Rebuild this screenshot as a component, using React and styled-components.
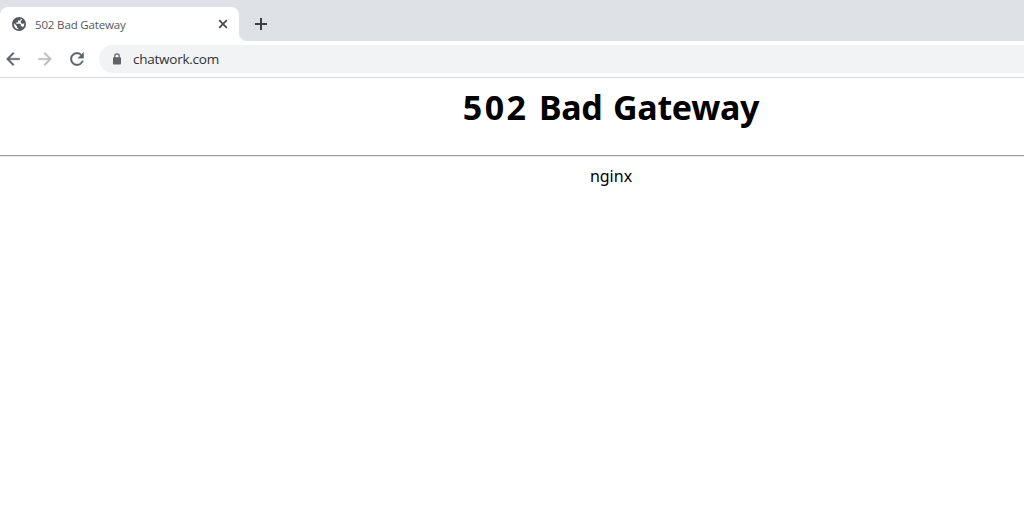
import styled, { createGlobalStyle } from 'styled-components'
import { MdArrowBack, MdArrowForward, MdRefresh } from 'react-icons/md'

const GlobalStyle = createGlobalStyle`
  * {
    box-sizing: border-box;
  }
  body {
    margin: 0;
    background-color: #fff;
    overflow: hidden;
  }
`

const StyledBrowser = styled.div`
  width: 100%;
  height: 527px;
  overflow: hidden;
  background-color: #fff;
  font-family: 'Open Sans', 'Noto Sans', sans-serif;
`

const StyledTabStrip = styled.div`
  display: flex;
  height: 41px;
  padding-top: 7px;
  background-color: #dee1e6;
`

const StyledTab = styled.div`
  display: flex;
  align-items: center;
  width: 239px;
  height: 34px;
  padding: 0 11px 0 12px;
  border-radius: 8px 8px 0 0;
  background-color: #fff;

  svg {
    flex: none;
    display: block;
  }
`

const StyledTabTitle = styled.span`
  flex: 1;
  margin-left: 9px;
  padding-top: 2px;
  font-size: 11.5px;
  line-height: 16px;
  letter-spacing: -0.15px;
  white-space: nowrap;
  color: #55585c;
`

// Outward curve where the tab meets the toolbar
const StyledTabFoot = styled.div`
  align-self: flex-end;
  width: 8px;
  height: 8px;
  background: radial-gradient(circle at 100% 0, transparent 7.5px, #fff 8.5px);
`

const StyledNewTab = styled.div`
  display: flex;
  align-items: center;
  height: 34px;
  margin-left: 8px;
`

const StyledToolbar = styled.div`
  display: flex;
  align-items: center;
  height: 37px;
  padding-left: 3px;
  border-bottom: 1px solid #d9dadc;
  background-color: #fff;
`

const StyledNavIcon = styled.div`
  display: flex;
  width: 32px;
  color: ${(props) => (props.$disabled ? '#babcbe' : '#5f6368')};

  path:not([fill='none']) {
    stroke: currentColor;
    stroke-width: 0.4px;
  }
`

const StyledAddressBar = styled.div`
  display: flex;
  flex: 1;
  align-items: center;
  height: 28px;
  padding-left: 13px;
  border-radius: 14px 0 0 14px;
  background-color: #f1f3f4;
`

const StyledUrl = styled.span`
  margin-left: 11px;
  font-size: 13.5px;
  line-height: 20px;
  letter-spacing: -0.25px;
  color: #303236;
`

// The window is wider than the visible area
const StyledPage = styled.main`
  width: 1222px;
  text-align: center;
  color: #000;
  font-family: 'Noto Sans', 'Open Sans', sans-serif;

  h1 {
    margin: 0;
    padding-top: 5px;
    height: 77px;
    font-size: 34px;
    line-height: 48px;
    font-weight: 700;
    letter-spacing: -0.3px;
    word-spacing: 2px;
  }

  hr {
    margin: 0;
    border: 0;
    height: 2px;
    border-top: 1px solid #9a9a9a;
    border-bottom: 1px solid #eee;
  }

  p {
    margin: 7px 0 0;
    font-size: 16px;
    line-height: 24px;
  }
`

const StyledCode = styled.span`
  letter-spacing: 2.4px;
`

const Globe = () => (
  <svg width='14' height='14' viewBox='0 0 14 14'>
    <circle cx='7' cy='7' r='7' fill='#55595e' />
    <path
      d='M8.6 1.7V2.4C8.6 3.1 8 3.6 7.3 3.6H6V4.8C6 5.2 5.7 5.5 5.3 5.5H4.2V6.8H8C8.4 6.8 8.8 7.1 8.8 7.5V9.3H9.5C10.2 9.3 10.7 9.7 10.9 10.4A5.2 5.2 0 0 0 12.3 7C12.3 6.7 12.3 6.4 12.2 6.1L11.4 6.7H9.8L8.7 5.6V4.2L9.9 3H10.4A5.3 5.3 0 0 0 8.6 1.7Z M1.9 6.1 5 9.2V9.9C5 10.6 5.6 11.2 6.3 11.2V12.3A5.3 5.3 0 0 1 1.9 6.1Z'
      fill='#fff'
    />
  </svg>
)

const CloseMark = () => (
  <svg width='10' height='10' viewBox='0 0 10 10'>
    <path d='M1.2 1.2 8.8 8.8M8.8 1.2 1.2 8.8' stroke='#45484c' strokeWidth='1.7' />
  </svg>
)

const Plus = () => (
  <svg width='12' height='12' viewBox='0 0 12 12'>
    <path d='M6 0V12M0 6H12' stroke='#3c4043' strokeWidth='2' />
  </svg>
)

const Lock = () => (
  <svg width='10' height='12' viewBox='0 0 10 12'>
    <rect x='1' y='4.3' width='8' height='7.2' rx='0.8' fill='#5f6368' />
    <path d='M2.8 5V3A2.2 2.2 0 0 1 7.2 3V5' fill='none' stroke='#5f6368' strokeWidth='1.2' />
  </svg>
)

const App = () => {
  return (
    <StyledBrowser>
      <GlobalStyle />
      <StyledTabStrip>
        <StyledTab>
          <Globe />
          <StyledTabTitle>502 Bad Gateway</StyledTabTitle>
          <CloseMark />
        </StyledTab>
        <StyledTabFoot />
        <StyledNewTab>
          <Plus />
        </StyledNewTab>
      </StyledTabStrip>

      <StyledToolbar>
        <StyledNavIcon>
          <MdArrowBack size={20} />
        </StyledNavIcon>
        <StyledNavIcon $disabled>
          <MdArrowForward size={20} />
        </StyledNavIcon>
        <StyledNavIcon>
          <MdRefresh size={20} />
        </StyledNavIcon>
        <StyledAddressBar>
          <Lock />
          <StyledUrl>chatwork.com</StyledUrl>
        </StyledAddressBar>
      </StyledToolbar>

      <StyledPage>
        <h1>
          <StyledCode>502</StyledCode> Bad Gateway
        </h1>
        <hr />
        <p>nginx</p>
      </StyledPage>
    </StyledBrowser>
  )
}

export default App
